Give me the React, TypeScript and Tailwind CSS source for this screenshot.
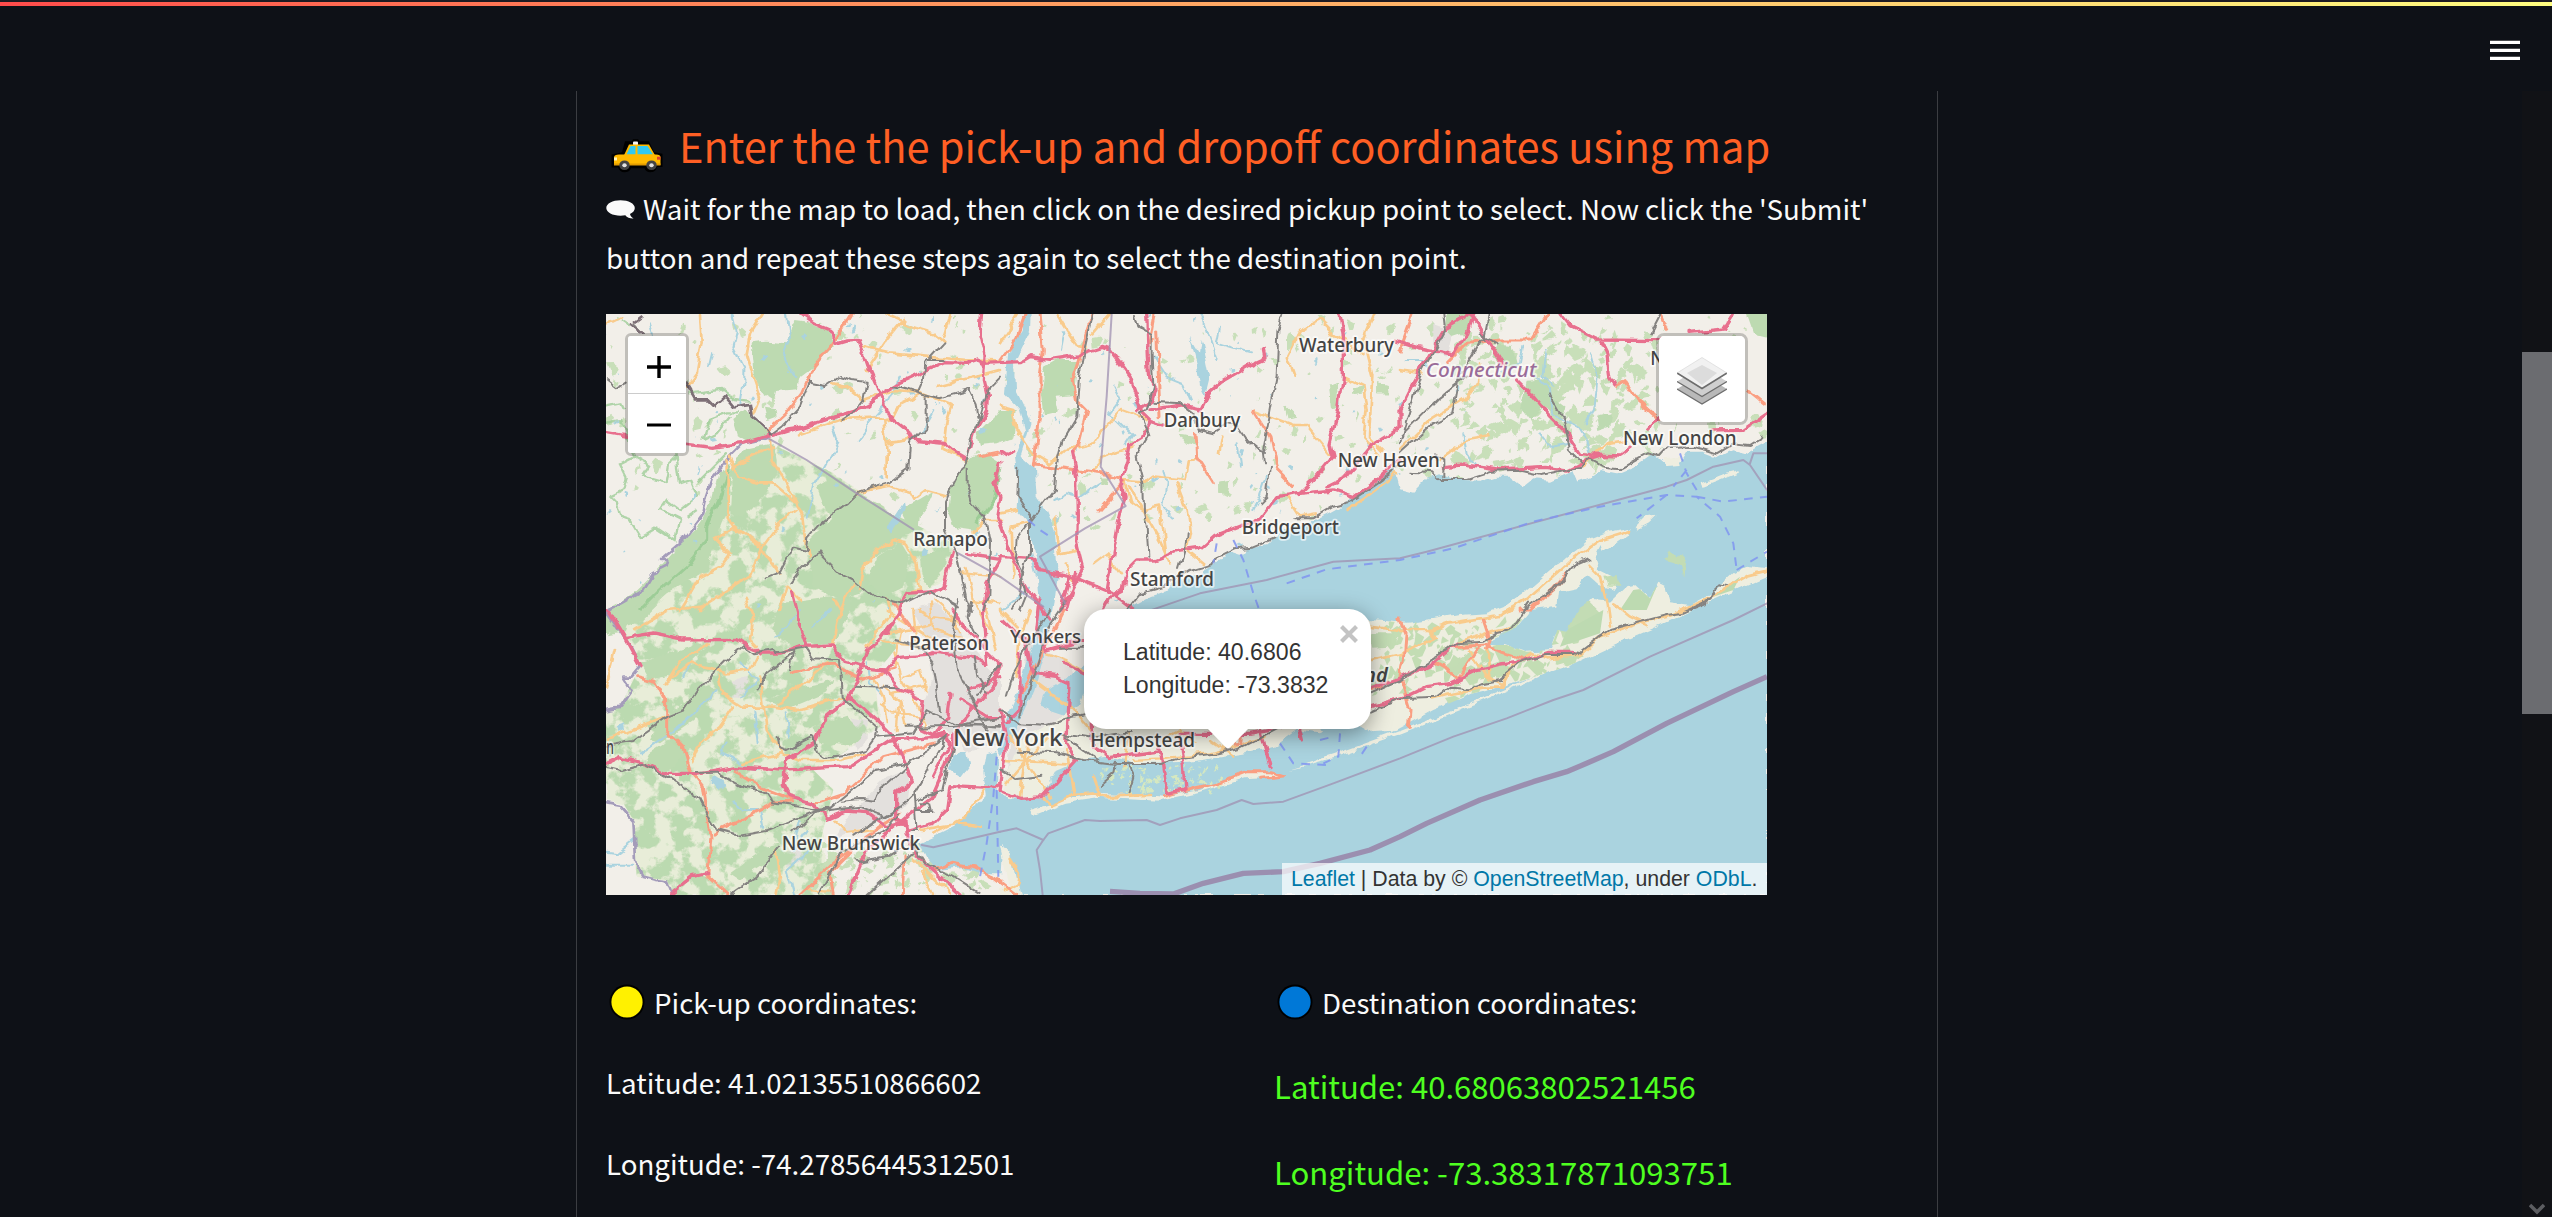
import type { ReactNode } from "react";

const SANS = "font-['Noto_Sans_CJK_SC','Noto_Sans',sans-serif]";
const ARIAL = "font-['Liberation_Sans',Arial,sans-serif]";

/* Map geometry uses three units for each screen pixel. */

const WATER = [
  // Long Island Sound and the open sea
  "M1420 1130L1440 1070L1490 1010L1560 950L1580 900L1600 885L1650 858L1700 842L1735 808L1800 795L1815 775L1860 750L1880 722L1920 735L1940 715L2000 703L2050 655L2130 640L2190 610L2225 590L2260 555L2320 530L2350 495L2385 478L2400 535L2440 545L2480 505L2520 490L2570 512L2640 515L2690 500L2730 500L2770 532L2800 508L2850 512L2920 480L2935 515L2975 500L3000 480L3050 490L3110 465L3160 430L3195 460L3240 458L3260 425L3310 425L3350 440L3400 415L3440 425L3501 392V1755H1262L1240 1690L1210 1600L1205 1690L1140 1690L1090 1672L1010 1680L975 1640L955 1600L1000 1580L1060 1550L1120 1500L1160 1455L1150 1390L1160 1330L1195 1320L1190 1440L1230 1465L1330 1465L1345 1380Z",
  // Hudson river
  "M1270 12L1265 60L1225 120L1215 250L1260 300L1275 360L1245 440L1255 520L1250 600L1285 640L1295 690L1310 760L1320 900L1305 1000L1250 1150L1215 1230L1190 1300L1205 1330L1240 1280L1300 1150L1340 1010L1360 880L1372 780L1365 660L1340 600L1310 560L1305 480L1262 440L1292 340L1245 240L1242 160L1290 60L1292 12Z",
  "M1420 1090L1450 1060L1460 1140L1410 1220L1320 1190L1330 1150Z",
  "M1060 1335L1100 1320L1110 1360L1080 1400L1050 1380Z",
  "M860 650L890 610L912 575L915 600L890 640L870 668Z",
  "M335 1395L380 1410L385 1435L360 1442L335 1425Z",
  "M1770 80L1800 130L1805 90L1820 150L1830 200L1815 260L1800 230L1790 160Z",
  "M50 1250L75 1240L78 1260L58 1268Z",
];

const LONG_ISLAND =
  "M1208 1450L1225 1380L1250 1310L1290 1280L1350 1240L1440 1180L1480 1080L1600 1000L1800 960L2000 950L2200 940L2310 930L2420 938L2500 930L2580 915L2660 910L2710 892L2770 850L2850 780L2930 720L2965 690L3020 668L3095 655L3085 675L3040 705L3010 725L3005 705L2985 745L2995 780L3045 805L3040 840L2995 825L2960 795L2930 835L2880 845L2875 890L2790 900L2745 955L2680 985L2660 1005L2720 1005L2780 1025L2850 1020L2872 960L2900 965L2940 910L2980 870L3030 875L3080 828L3105 825L3150 865L3175 815L3195 825L3210 880L3270 888L3330 855L3400 790L3440 770L3501 778V800L3400 845L3300 890L3180 945L3040 1005L2900 1070L2740 1120L2700 1130L2620 1150L2500 1200L2380 1265L2320 1270L2240 1235L2160 1270L2090 1260L2020 1310L1940 1330L1770 1355L1600 1360L1520 1340L1440 1350L1370 1380L1340 1440L1330 1465L1230 1465Z";

const BARRIERS = [
  "M1290 1500L1360 1480L1400 1465L1500 1452L1660 1458L1690 1460L1800 1440L1930 1390L2010 1385L2050 1398L1990 1402L1930 1405L1800 1445L1680 1472L1500 1464L1400 1478L1300 1518Z",
  "M2060 1378L2200 1335L2400 1262L2640 1170L2860 1075L2980 1015L2860 1082L2640 1178L2400 1272L2200 1345Z",
  "M1200 1610L1225 1615L1240 1660L1262 1755H1200V1735L1225 1725Z",
  "M3305 520L3380 490L3420 480L3410 492L3350 515L3310 530Z",
  "M3190 445L3240 440L3245 465L3200 468Z",
  "M3110 655L3140 625L3170 620L3150 640L3130 650L3118 662Z",
];

const DEEP_FOREST = [
  "M455 100L500 95L560 100L580 30L620 35L650 50L690 60L700 110L640 170L600 200L590 235L525 240L520 270L490 250L465 205L460 150Z",
  "M400 330L440 300L480 345L505 375L440 395L415 380Z",
  "M495 290L525 295L530 320L505 330Z",
  "M400 460L450 415L520 400L530 450L530 495L490 560L430 620L390 610L395 520Z",
  "M18 900L100 850L180 770L250 690L300 640L340 560L360 480L395 470L380 600L350 680L320 780L200 850L120 920L18 965Z",
  "M650 530L700 500L780 550L860 600L960 655L900 690L800 760L790 850L720 870L640 830L620 700L690 630Z",
  "M900 600L960 570L1000 545L985 580L960 610L955 660L920 640Z",
  "M830 740L900 690L930 740L910 830L850 860L800 820Z",
  "M960 740L1040 720L1035 780L985 830L965 800Z",
  "M1050 540L1100 450L1160 430L1200 455L1190 560L1130 660L1060 650L1040 600Z",
  "M1130 370L1200 300L1250 300L1240 380L1190 400L1140 405Z",
  "M1335 170L1370 150L1445 150L1430 200L1425 255L1370 260L1380 310L1335 320L1325 250Z",
  "M2540 12L2610 12L2605 60L2560 75L2535 50Z",
  "M2690 100L2740 105L2755 170L2720 180L2680 140Z",
  "M2780 215L2840 210L2860 260L2900 290L2880 320L2830 290L2790 330L2760 290Z",
  "M2980 160L3005 165L3000 210L2980 200Z",
  "M2988 320L3030 310L3025 350L2995 360Z",
  "M3440 12H3501V80L3460 70Z",
  "M540 880L680 860L760 870L730 950L700 1000L560 1000L510 960Z",
  "M120 1060L290 1000L320 1010L240 1090L150 1110Z",
  "M180 1230L330 1120L350 1140L280 1230L180 1300L150 1290Z",
  "M500 1170L600 1130L700 1110L680 1150L560 1200Z",
  "M20 970L90 890L180 880L130 930L80 945L75 960Z",
  "M640 1250L740 1220L790 1270L750 1310L660 1300Z",
  "M390 1690L500 1610L545 1600L500 1660L420 1710Z",
  "M150 1330L210 1290L260 1330L190 1390L130 1370Z",
  "M2520 1080L2620 1020L2610 1060L2570 1095Z",
  "M2600 1100L2660 1060L2720 1070L2690 1100L2600 1110Z",
  "M2920 910L2970 880L3000 910L2960 940L2900 960Z",
  "M3010 800L3050 795L3055 830L3020 830Z",
  "M3195 750L3210 715L3225 735L3258 740L3250 800L3240 765L3215 755Z",
  "M2185 225L2210 215L2215 290L2190 295Z",
  "M2250 235L2290 230L2285 250L2255 255Z",
  "M2335 220L2360 225L2362 250L2335 250Z",
  "M1855 515L1885 510L1880 550L1855 545Z",
  "M1740 375L1780 380L1785 410L1755 400Z",
  "M2310 970L2390 970L2395 1005L2320 1010Z",
  "M2050 285L2085 320L2060 325Z",
  "M1500 500L1530 500L1525 525L1505 528Z",
];

const FOREST_ZONE =
  "M395 470L510 400L700 490L860 600L960 650L1060 700L1040 800L880 900L900 1000L820 1100L840 1250L700 1350L640 1380L700 1440L660 1600L700 1755H220L200 1710L110 1700L100 1530L70 1480L18 1470V1200L60 1190L120 1070L80 1000L18 900L180 800L320 680Z";

const MOTORWAY = [
  "M18 370L85 382M255 402L330 412L430 400L500 378L540 370L620 345L700 322L750 310L800 290L840 255L800 165L775 88L740 90L705 100L700 65L640 40L600 12",
  "M500 380L560 360L610 352L720 315L760 305L820 275L840 250L900 215L1030 158L1100 160L1130 150L1150 160L1265 155L1290 140L1350 148L1440 135L1510 112L1530 120L1590 200L1630 310L1655 335L1690 345",
  "M840 255L870 320L920 360L935 390L1030 400L1060 425L1095 445",
  "M1145 12L1140 70L1155 140L1150 210L1162 260L1160 300L1125 360L1105 430",
  "M1200 430L1215 440L1235 430M1200 460L1185 520L1200 560L1190 620L1205 660L1235 740L1280 830L1350 930",
  "M1200 740L1300 745L1320 785L1410 800L1460 822L1530 850L1560 870L1600 900",
  "M1650 335L1630 380L1590 405L1580 460L1565 510L1575 560L1555 640L1545 700L1535 760L1520 850",
  "M1415 430L1430 500L1432 620L1430 700L1450 780L1400 870L1380 900M1410 800L1380 900M1430 790L1400 900",
  "M1510 900L1530 860L1570 840L1580 780L1610 750L1660 750L1730 725L1800 715L1840 680L1910 652L1980 625L2030 560L2100 550L2200 540L2260 560L2350 495L2400 450",
  "M1640 12L1645 140L1650 210L1665 240L1655 270L1610 305M1650 300L1740 285L1800 300L1825 250L1865 215L1950 165L1995 145L1990 120",
  "M2180 530L2240 500L2320 400L2400 350L2400 300L2440 220L2530 60L2610 12",
  "M2220 12L2230 80L2230 200L2215 300L2190 400L2200 440L2150 500L2100 550",
  "M2385 90L2450 110L2540 130L2560 135L2600 70L2620 12M2600 12L2640 55L2710 165M2750 210L2800 260L2850 320L2900 370L2940 430L2980 435L3060 438L3090 415",
  "M2530 470L2590 465L2700 480L2830 472L2900 480L2950 455L3000 440",
  "M2880 12L2910 50L2990 90L3180 92M3000 90L3020 130L3030 200L3045 225M3270 70L3370 60L3400 12M3140 360L3180 320M3330 360L3430 358L3501 310",
  "M80 985L160 972L250 990L400 988L460 1015L480 1032L540 1032L600 1010L700 1005L740 1060L800 1075L860 1080L890 1040L1010 1030L1100 1040L1160 1060",
  "M575 850L600 950L620 1005M880 930L840 990L800 1020L770 1120L730 1180L680 1220L640 1300L560 1350L550 1420L570 1460L640 1480L680 1525L740 1500L800 1505L860 1550L915 1540",
  "M18 1360L60 1340L140 1365L200 1390L290 1390L400 1370L550 1380L750 1370L870 1290L1000 1280L1050 1280",
  "M750 1160L830 1230L880 1280L940 1410L890 1450L890 1520L920 1560L1000 1540L1040 1500L1050 1430L1170 1435L1200 1420",
  "M850 1080L900 1140L970 1170L960 1250L1000 1270M1050 1150L1040 1220L1000 1280",
  "M1000 845L920 850L900 900L860 970M1060 900L1090 950L1150 1010L1200 1060L1180 1130L1080 1240L1060 1300L1030 1390L1000 1460L920 1520L800 1620L745 1755",
  "M1060 720L1030 830L980 850M1100 730L1200 745M1200 750L1160 820L1150 920L1160 1060",
  "M915 1530L915 1570L960 1650L1080 1755M18 890L60 960L120 1070M215 1750L280 1700L320 1690",
  "M1480 1240L1480 1310L1530 1340L1680 1320M1680 1310L1700 1445M1740 1280L1750 1370L1755 1440L1700 1450",
  "M1980 1250L2010 1370M1740 1270L1950 1270L2110 1240M2100 1250L2110 1290",
  "M2310 1135L2400 1105L2500 1060L2570 1000M2310 1190L2420 1160L2480 1130L2550 1120L2620 1085L2700 1065L2770 1055L2840 1030L2930 1030",
  "M1210 930L1280 1000L1300 1090L1370 1100L1410 1120L1400 1300L1430 1350L1330 1460L1260 1465L1200 1440L1220 1300L1200 1200",
  "M1390 1060L1470 1100M1260 1030L1260 1200L1220 1240M1320 870L1310 960L1340 1020L1480 980",
  "M1100 1140L1160 1120L1200 1100M1080 1170L1160 1220L1210 1220M1000 1280L1030 1270L1050 1300L1000 1400",
];

const TRUNK = [
  "M755 12L720 70L690 110L640 170L605 250L560 310L500 365",
  "M1275 12L1250 80L1200 150M1320 12L1330 120L1320 200L1320 310L1300 470M1480 12L1460 70L1440 150L1420 210L1430 270L1460 300L1435 400L1415 430",
  "M1300 465L1360 470L1430 480L1520 490L1575 515L1500 600M1665 12L1650 100L1660 90M1670 60L1680 320M1785 370L1790 440L1840 520",
  "M1960 300L2010 380L2030 480L2080 530M2440 12L2400 120M2540 160L2600 100L2700 90L2790 90L2840 12",
  "M110 1100L170 1115L200 1170L200 1260L250 1310L270 1380L310 1430L330 1580L320 1700L380 1755M340 1570L520 1480L580 1475M400 1380L480 1430L580 1470M640 1480L730 1450L850 1340L1000 1300",
  "M570 1090L640 1070L700 1065L780 1110L880 1080M600 1755L700 1660L800 1580L900 1510M700 1755L690 1690L760 1620",
  "M910 1755L915 1640M1000 1680L1060 1660L1120 1670L1200 1710M880 880L940 960",
  "M1690 1460L1740 1445L1850 1420L1940 1385L2010 1385L2050 1398M1985 1405L2050 1398M2300 1140L2350 1130M2400 930L2415 970L2410 1050L2400 1100L2430 1200L2425 1255",
  "M2650 930L2670 990L2660 1020M2560 1010L2660 1005M2640 1010L2570 1110M2500 1060L2570 1100M2660 1010L2780 1050M2900 790L2860 840L2790 900L2760 900",
  "M3050 230L3075 215L3110 270L3180 330M3440 240L3490 280M3180 12L3200 60M1180 1700L1250 1755M1190 430L1140 440",
  "M1905 1270L1930 1275L1928 1300L1905 1302L1905 1280M1390 900L1360 960L1250 1180",
];

const PRIMARY = [
  "M300 12L305 100L290 190L260 230M485 12L450 70L440 130L460 200L480 260L460 310M18 40L60 20M900 40L1000 70L1030 95M910 30L860 90L800 180M860 12L910 35M785 110L870 130L980 140L1100 150L1200 155M1050 12L1030 80",
  "M700 220L740 230L790 270L880 240L960 245L1020 270L1055 285L1040 330L1030 420L1100 450M1010 230L1200 180M600 370L720 330L850 325L880 320L900 280L960 250M860 400L930 390M850 330L860 420L860 500",
  "M770 550L870 530L930 550L940 570L980 540L1035 555M510 390L515 450L560 520L610 620L625 740M390 440L420 500L470 520L520 520L580 570",
  "M380 450L380 620L400 650L480 710L540 790M400 470L520 410M400 650L345 685L390 730L360 770L300 800L240 900M540 900L560 830L600 870M590 600L540 640L480 720L450 800L410 820L330 870L300 900",
  "M780 840L790 780L830 720L880 690L920 700L950 760L960 840L920 850M720 900L740 850L760 820M1200 630L1160 630L1120 670",
  "M18 1290L120 1250L200 1220M320 1000L290 1030L240 1050L200 1120M100 960L200 900L310 890M440 870L460 920L450 990L470 1010M470 1040L450 1080L380 1090L300 1070L270 1060L200 1120M360 1100L370 1150L430 1190L520 1190L600 1200L740 1160M480 1100L490 1180L500 1260L550 1330M530 1180L600 1130L680 1060M400 1190L360 1250L300 1300L280 1350",
  "M700 870L720 900L700 1000M860 870L870 910L800 1010M18 1130L45 1020M430 1360L540 1330L600 1350L720 1350L800 1330",
  "M1140 1550L1080 1540L960 1560M1160 1430L1100 1520L1000 1570M530 1755L540 1700L530 1620M700 1530L740 1570L820 1560M970 1690L1000 1755M940 1650L1050 1750",
  "M1370 12L1400 60L1430 105L1460 110M1480 70L1530 12M1350 460L1400 420L1480 400L1500 370L1560 300L1640 330M1470 490L1500 460L1500 440L1600 410",
  "M1575 510L1590 570L1630 600L1680 590L1700 740M1575 510L1640 515L1660 500L1760 510L1770 450L1790 440M1730 520L1760 600L1770 670L1760 720L1810 760M1590 530L1680 690L1710 760",
  "M1860 430L1870 380M1960 300L2080 345L2120 345L2190 430M2080 200L2060 140L2100 60L2160 30L2200 70L2290 130M2230 200L2290 230L2300 300L2290 380L2340 430M2320 12L2290 80L2320 200L2310 380L2350 420",
  "M2400 180L2470 190M2400 420L2500 320L2600 260L2630 220L2640 160M2510 450L2540 430L2600 390L2670 378M2950 470L3020 400L3080 390M2390 490L2300 560L2240 600M2060 560L2100 620L2150 610",
  "M1255 12L1200 100M1200 290L1240 300L1255 370M1240 340L1300 430L1350 460M1365 620L1380 730L1430 720M1200 610L1250 600M1240 800L1235 650L1280 640",
  "M2400 960L2490 960L2550 940L2640 925L2700 915L2780 870L2860 800L2940 730L3000 690L3090 662M2490 960L2510 985L2400 1030M2570 1000L2660 970L2730 955M2960 760L3000 800L3020 880L3030 950M3040 880L3090 920L3140 945",
  "M2610 1020L2660 1100L2700 1120M2660 1020L2665 1100M2700 1130L2740 1070L2800 1030L2840 1045L2940 1035L3000 980L3130 935L3200 920L3320 870L3440 800L3500 785M2500 1165L2540 1155L2650 1130L2710 1130L2730 1090",
  "M2310 950L2400 960M2310 1050L2400 1030M1410 1455L1490 1450L1500 1460L1650 1455M1400 1320L1420 1450M1480 1400L1500 1455M1330 1460L1355 1485L1410 1460M1215 1740L1250 1720L1260 1690L1235 1650",
  "M1200 900L1260 960L1250 1100M1290 900L1260 990M1300 1110L1420 1200L1490 1280M1230 1280L1350 1460M1280 1300L1260 1460M1210 1350L1400 1360M1340 1280L1220 1420",
];

const URBAN = [
  "M860 970L900 960L960 950L1000 940M850 990L880 1000L980 1010M880 1030L900 1100L950 1180L980 1250M900 960L880 1080M940 900L950 1010M860 900L1000 990M850 1130L900 1170L920 1250M840 1180L880 1210L960 1220M820 1100L850 1160L860 1240M870 1150L980 1130M900 1170L890 1260M990 880L1000 960L1090 990M960 900L990 920L1060 930L1080 970M1000 870L1100 960M910 1100L960 1080L980 1140",
  "M1100 780L1120 870L1180 980M1110 870L1200 880M1090 790L1200 800M1160 900L1190 1020M1400 760L1420 820M1390 1050L1460 1090M1340 1030L1400 1050",
  "M1480 760L1520 730L1560 790M1700 1280L1740 1260L1780 1300M1600 1350L1680 1345L1830 1330L1900 1310L2000 1280M1580 1270L1570 1370M1830 1290L1900 1340M2250 1150L2310 1140M620 1740L690 1745",
];

const RAIL = [
  "M18 210L50 235L80 215M985 150L1030 100M1030 150L980 150L975 200L955 245M630 215L680 225L720 198L750 210L800 215L790 270L760 310L730 330M630 215L600 290L550 345L510 375M880 225L920 235L960 248L1020 265L1110 240L1130 280L1135 320",
  "M1200 200L1165 235L1140 320L1110 390L1105 440L1060 520L1035 570L1035 660L1070 720L1100 870L1110 900",
  "M980 260L980 350L930 400L925 480L870 520L770 550L740 580L660 640L625 680L620 720L580 710L540 790L500 805",
  "M570 820L600 780L640 740L660 730L720 790L760 810L820 860L910 885L990 845L1080 895",
  "M18 1305L100 1290L200 1220L250 1200L290 1140L350 1080L380 1050L430 1008L460 1030L520 1020L530 1030L620 1015L640 1045L720 1050L725 1160L830 1250L825 1280L940 1270L980 1200L1060 1240L1200 1250",
  "M580 1025L570 1080M580 1030L500 1090L470 1135M530 1275L535 1310L560 1320L640 1280L650 1320L680 1340L740 1335L800 1320L825 1285M765 1130L900 1135",
  "M18 1370L60 1380L130 1360L200 1400L300 1470L330 1530L350 1560L410 1575L500 1560L640 1505L780 1490L860 1520L900 1490M290 1385L350 1385L430 1430L500 1450L520 1480L600 1490L650 1500L690 1495L830 1380L920 1360L1040 1280",
  "M1040 1280L940 1450L900 1490L820 1540L760 1580M660 1750L700 1680L730 1620L860 1560L900 1510M725 1475L780 1470L820 1475L830 1450L930 1360M650 1500L580 1570M390 1755L470 1700L540 1610",
  "M920 1250L1200 1245M940 1440L950 1560L930 1560M930 1590L970 1660L1060 1700L1140 1750M940 1630L800 1755M770 1640L780 1655L870 1640L900 1620M950 1470L1030 1440L1060 1310M960 1480L990 1480L995 1500L950 1500",
  "M1480 12L1460 100L1440 200L1432 320L1390 390L1370 470L1365 540L1320 600L1250 690L1245 740L1270 790L1260 860L1230 900",
  "M1100 470L1100 520L1120 580L1155 620L1170 700L1165 860L1150 900M1255 470L1252 560L1290 620L1290 720L1270 800L1280 850L1260 900",
  "M1605 12L1615 50L1655 75L1655 140L1660 230L1640 300L1620 310L1645 380L1610 440L1630 520L1632 600L1640 650L1645 740M1660 275L1740 280L1780 310L1800 360L1840 370L1880 340L1910 345L1940 390L1995 435",
  "M2050 12L2035 60L2030 200L2010 310L1990 420L1995 460M2010 470L2000 560L1980 580",
  "M1580 900L1620 850L1690 830L1770 780L1840 760L1850 740L1900 715L1960 710L2020 685M2085 625L2140 625L2200 590L2240 580L2330 520L2400 470",
  "M1760 670L1755 730L1740 780M2400 430L2500 340L2560 310L2580 200L2640 100L2660 80M2640 70L2690 100M2670 12L2655 90M2530 12L2535 60L2460 200L2400 400M2400 380L2520 260L2600 200",
  "M2430 485L2500 490L2520 510L2600 510L2680 485L2760 482L2820 495L2880 482L2940 470L2970 448L3010 470L3060 475L3140 430L3180 438L3200 415L3280 410L3320 420L3350 430L3400 400L3450 405L3490 380M2945 455L2910 420L2890 320L2850 250M2505 430L2530 445L2530 500",
  "M2770 900L2860 840L2930 760L2965 745M3330 870L3340 840L3360 820L3390 825M3270 900L3320 880L3340 850",
  "M2310 1150L2400 1110L2480 1060L2570 1000L2650 995L2690 970L2730 960L2790 875M2310 1205L2400 1165L2510 1160L2550 1130L2610 1135L2650 1120L2700 1110L2760 1060L2830 1035L2930 1035L3000 980L3030 960L3200 915L3240 910L3320 875",
  "M1250 1325L1370 1330L1450 1350L1550 1362L1680 1362L1740 1345L1850 1330L1930 1310L2040 1255L2110 1235M1380 1270L1470 1285L1590 1265M1400 1280L1495 1350M1580 1360L1600 1400L1585 1450M1545 1355L1540 1390L1500 1425M1200 1200L1260 1240L1340 1245L1410 1225L1460 1215",
  "M1400 870L1340 960L1300 1100L1260 1220M1350 900L1240 1090L1220 1160M1380 1010L1450 1010M1200 1380L1250 1410L1330 1400M3180 12L3150 70",
  "M100 40L130 75M1080 870L1060 950L1070 1070L1120 1180L1160 1260M1110 870L1100 920L1130 980M1120 1040L1130 1100L1160 1150M880 990L960 1010L1000 1060L1020 1200M1130 1160L1200 1060M1090 1240L1200 1220",
];

const STATE_LINE = [
  "M505 385L620 450L770 550L940 658M1075 730L1200 800L1330 890",
  "M1535 12L1520 260L1502 470L1577 588L1455 655L1320 740L1395 880",
  "M1200 1565L1250 1555L1330 1590L1345 1570L1455 1530L1500 1533L1640 1530L1680 1545L1740 1525L1850 1500L1925 1470L1960 1482L2050 1475L2200 1420L2400 1345L2560 1280L2720 1225L2860 1170L2950 1140L3150 1040L3400 930L3501 880",
  "M1330 1590L1310 1620L1320 1680L1328 1755M965 1605L1000 1612L1200 1565M1640 905L1800 850L2000 810L2200 755L2400 745L2480 725L3200 530L3260 510L3340 470L3430 450L3450 465L3501 540M3450 460L3460 430L3501 430",
];

const RIVER_LINE = [
  "M18 900L60 880L130 840L160 790L200 770L205 750L180 750L250 690L310 610L320 560L340 500L380 450L430 400L500 385",
  "M18 905L50 950L90 1010L120 1070L95 1100L70 1100L80 1115L95 1140L60 1190L18 1198",
  "M18 1477L60 1485L100 1530L105 1650L130 1700L170 1710L205 1715L220 1755",
];

const STREAMS = [
  "M395 12L410 70L400 110L430 170L430 230L420 290M560 12L570 80L545 130L590 200M700 350L715 400L680 460L640 530L620 620M150 40L160 90L140 120L120 110M340 130L330 170",
  "M18 1625L50 1630L100 1590M18 1670L100 1670M120 1330L250 1240L350 1140M270 1060L250 1100M380 1300L370 1330L440 1370L480 1380M400 1480L430 1500L480 1500L490 1550M560 1210L570 1280M460 1200L470 1300M600 900L560 950L530 980M690 900L640 950",
  "M900 200L860 280L800 350L770 390M1000 300L960 370M800 1060L810 1120L840 1150M430 1060L470 1110L430 1160M600 1530L580 1620L620 1560M640 1610L560 1680L580 1755",
  "M1360 570L1400 550L1440 560L1500 520M1540 230L1560 270L1530 310L1570 350M1390 70L1380 120M1910 400L1920 470M1800 12L1830 90L1850 150M1660 140L1700 200L1750 220L1770 270M1860 50L1850 100L1950 130M1690 480L1700 520L1690 590L1720 620",
  "M2770 110L2760 160L2700 180M2810 200L2850 240L2860 310L2930 350L2960 400L2970 430M2840 120L2830 200L2860 230M2970 130L2990 200L2980 300L2960 340M2590 370L2600 430L2630 470M2820 370L2850 410L2920 400M2420 150L2470 150L2500 180",
  "M1200 900L1230 880L1290 830M1290 720L1310 800M1560 330L1600 370L1580 400M2000 500L1980 560L1960 600",
];

const PARK_LINES =
  "M18 290L60 280L70 300M18 340L60 330L70 350L100 440M265 250L360 240L400 270L450 275M310 390L330 330L380 310L420 310M310 390L350 370L390 320M30 560L70 540L80 500L60 460L100 440L150 470L130 500L200 520L210 460L230 440L240 520L270 510L290 560L240 600L200 570L180 600L240 630L230 690L170 650L120 680L90 630L60 620L50 580Z M290 520L340 470L380 430M260 620L290 600M60 30L90 50";

const FERRY = [
  "M1900 690L1930 750L1960 850L1985 920M2060 820L2180 778L2400 750L2560 715L2800 635L3000 590L3200 555L3290 560L3360 620L3400 700L3410 780M3290 560L3370 575L3501 560M3410 780L3501 725M3200 555L3110 625M3240 430L3260 490L3290 540M3260 480L3220 530",
  "M1285 630L1320 660L1350 680M1190 1340L1180 1460L1160 1600L1140 1700M1190 1440L1195 1700M2040 1300L2080 1360L2180 1365M2220 1270L2215 1340L2170 1360M2300 1310L2280 1340M2160 1290L2200 1280M1850 700L1840 760",
];

const SEA_LIMIT =
  "M1530 1744L1620 1750L1720 1752L1810 1720L1930 1690L2050 1685L2160 1660L2310 1620L2400 1580L2480 1540L2640 1470L2800 1415L2900 1385L2960 1360L3040 1325L3200 1240L3400 1145L3501 1100";

const GREY_TOWN = [
  "M940 900L1000 880L1060 930L1100 1000L1160 1060L1200 1100V1300L1100 1320L1050 1270L980 1240L960 1200L1000 1100L980 1000Z",
  "M390 1120L440 1100L450 1160L400 1160Z",
  "M750 1220L800 1230L800 1290L770 1320Z",
  "M1290 1000L1400 1050L1450 1220L1400 1440L1220 1440L1230 1300L1260 1150Z",
  "M860 1400L930 1370L920 1480L880 1520L700 1590L740 1520Z",
  "M550 1640L600 1600L610 1650L560 1670Z",
  "M2420 1150L2460 1180L2480 1220L2430 1240Z",
  "M2500 40L2560 60L2540 140L2500 130Z",
];

type Label = { t: string; x: number; y: number; w: number; s: number };
const LABELS: Label[] = [
  { t: "Ramapo", x: 940, y: 708, w: 223, s: 57 },
  { t: "Waterbury", x: 2097, y: 125, w: 285, s: 57 },
  { t: "Danbury", x: 1691, y: 350, w: 230, s: 57 },
  { t: "New Haven", x: 2213, y: 472, w: 306, s: 57 },
  { t: "Bridgeport", x: 1925, y: 672, w: 292, s: 57 },
  { t: "Stamford", x: 1590, y: 829, w: 252, s: 57 },
  { t: "New London", x: 3069, y: 406, w: 341, s: 57 },
  { t: "N", x: 3151, y: 166, w: 42, s: 57 },
  { t: "Paterson", x: 928, y: 1021, w: 240, s: 57 },
  { t: "Yonkers", x: 1230, y: 999, w: 213, s: 55 },
  { t: "New York", x: 1059, y: 1309, w: 329, s: 70 },
  { t: "Hempstead", x: 1471, y: 1312, w: 314, s: 57 },
  { t: "New Brunswick", x: 545, y: 1620, w: 415, s: 57 },
  { t: "n", x: 19, y: 1332, w: 23, s: 57 },
];

function noise(seed: number) {
  let v = seed;
  return () => {
    v = (v * 16807) % 2147483647;
    return v / 2147483647;
  };
}

/* Small irregular patches of wood and pond scattered over the land. */
function scatter(seed: number, n: number, x0: number, y0: number, w: number, h: number, size: number) {
  const r = noise(seed);
  let d = "";
  for (let i = 0; i < n; i++) {
    const x = x0 + r() * w;
    const y = y0 + r() * h;
    const k = size * (0.3 + r());
    d += `M${x.toFixed(0)} ${y.toFixed(0)}l${(k * r()).toFixed(0)} ${(-k * r()).toFixed(0)}l${(k * r()).toFixed(0)} ${(k * 0.5).toFixed(0)}l${(-k * 0.3).toFixed(0)} ${(k * r()).toFixed(0)}l${(-k * r()).toFixed(0)} ${(k * 0.2).toFixed(0)}z`;
  }
  return d;
}

const WOODS_N = scatter(17, 330, 18, 12, 3483, 640, 22);
const WOODS_E = scatter(91, 170, 2550, 60, 600, 400, 32);
const PONDS = scatter(43, 150, 18, 12, 2600, 900, 13);
const MARSH = scatter(71, 110, 1500, 1370, 360, 80, 11);
const ISLAND_WOODS = scatter(7, 170, 2320, 940, 600, 230, 30);
const SOUTH_WOODS = scatter(29, 120, 640, 1600, 500, 150, 24);

function Lines({ d, c, w, dash, o }: { d: string[]; c: string; w: number; dash?: string; o?: number }) {
  return (
    <g fill="none" stroke={c} strokeWidth={w} strokeDasharray={dash} opacity={o} strokeLinejoin="round" strokeLinecap={dash ? "butt" : "round"}>
      {d.map((p, i) => (
        <path key={i} d={p} />
      ))}
    </g>
  );
}

function Shapes({ d, c, o }: { d: string[]; c: string; o?: number }) {
  return (
    <g fill={c} opacity={o}>
      {d.map((p, i) => (
        <path key={i} d={p} />
      ))}
    </g>
  );
}

function MapTiles() {
  return (
    <svg viewBox="18 12 3483 1743" preserveAspectRatio="none" className="block h-full w-full">
      <defs>
        <filter id="mottle" x="0" y="0" width="100%" height="100%" colorInterpolationFilters="sRGB">
          <feTurbulence type="fractalNoise" baseFrequency="0.018" numOctaves="5" seed="8" />
          <feColorMatrix values="0 0 0 0 0.735  0 0 0 0 0.855  0 0 0 0 0.69  9 0 0 0 -4.1" />
        </filter>
        <filter id="wobble" x="-2%" y="-2%" width="104%" height="104%" colorInterpolationFilters="sRGB">
          <feTurbulence type="fractalNoise" baseFrequency="0.02" numOctaves="3" seed="3" result="n" />
          <feDisplacementMap in="SourceGraphic" in2="n" scale="26" xChannelSelector="R" yChannelSelector="G" />
        </filter>
        <clipPath id="zone">
          <path d={FOREST_ZONE} />
        </clipPath>
        <clipPath id="island">
          <path d={LONG_ISLAND} />
        </clipPath>
      </defs>
      <rect x="18" y="12" width="3483" height="1743" fill="#f2efe9" />
      <g filter="url(#wobble)">
        <path d={FOREST_ZONE} fill="#e8edd8" />
        <path d={WOODS_N + WOODS_E + SOUTH_WOODS} fill="#c8dfb9" />
        <Shapes d={GREY_TOWN} c="#e3e0dd" />
      </g>
      <g clipPath="url(#zone)">
        <rect x="18" y="400" width="1060" height="1355" filter="url(#mottle)" />
      </g>
      <g filter="url(#wobble)">
        <Shapes d={DEEP_FOREST} c="#bddab1" />
        <path d={PARK_LINES} fill="none" stroke="#9fcd98" strokeWidth="7" opacity="0.8" />
        <path d="M390 460L360 560L320 650L320 690L270 760L180 840L120 900M1200 470L1185 560L1130 640" fill="none" stroke="#90c78b" strokeWidth="9" opacity="0.7" />
        <path d={PONDS} fill="#aad3df" />
        <Shapes d={WATER} c="#aad3df" />
        <path d={LONG_ISLAND} fill="#eeeee0" />
        <Shapes d={BARRIERS} c="#efeee0" />
        <path d="M1350 1400L1440 1370L1500 1360L1480 1440L1360 1460ZM2160 1250L2240 1225L2320 1270L2200 1320Z" fill="#aad3df" />
        <path d={MARSH} fill="#d5e8c0" />
        <Shapes d={DEEP_FOREST.slice(26)} c="#c3dcb4" />
      </g>
      <g clipPath="url(#island)">
        <path d={ISLAND_WOODS} fill="#c3ddb4" />
        <path d="M3100 840L3170 830L3140 900L3060 900ZM2900 960L3010 900L3000 970L2880 1010ZM3340 860L3420 800L3400 840Z" fill="#bddab1" />
      </g>
      <g filter="url(#wobble)">
        <Lines d={STREAMS} c="#aad3df" w={6} />
        <Lines d={RIVER_LINE} c="#a49cba" w={8} />
        <Lines d={URBAN} c="#f9cb8c" w={7} />
        <Lines d={PRIMARY} c="#f9cb8c" w={8} />
        <Lines d={TRUNK} c="#fa9f82" w={9} />
        <Lines d={MOTORWAY} c="#e8708e" w={10} />
        <Lines d={RAIL} c="#858381" w={6} />
        <path d="M100 35L130 12M90 40L130 75M255 215L285 265L330 265L350 285L375 262L400 292L450 285L455 320L490 350L510 375" fill="none" stroke="#7d6f76" strokeWidth="8" />
      </g>
      <Lines d={STATE_LINE} c="#a091b2" w={6} o={0.75} />
      <path d={SEA_LIMIT} fill="none" stroke="#9b8fb0" strokeWidth="16" strokeLinejoin="round" />
      <Lines d={FERRY} c="#8095f0" w={6} dash="26 22" o={0.85} />
      <g className="font-['Noto_Sans',sans-serif]" fill="#444" fontWeight="500" stroke="#ffffff" strokeOpacity="0.65" strokeWidth="11" strokeLinejoin="round" paintOrder="stroke">
        {LABELS.map((l) => (
          <text key={l.t} x={l.x} y={l.y} fontSize={l.s} textLength={l.w} lengthAdjust="spacingAndGlyphs">
            {l.t}
          </text>
        ))}
        <text x="2477" y="200" fontSize="57" fontStyle="italic" fill="#9a6c99" textLength="332" lengthAdjust="spacingAndGlyphs">
          Connecticut
        </text>
        <text x="2363" y="1115" fontSize="60" fontStyle="italic" fontWeight="600" textAnchor="end">
          nd
        </text>
      </g>
    </svg>
  );
}

function LayersIcon() {
  return (
    <svg viewBox="0 0 50 48" className="h-12 w-[50px]">
      <path d="M0 32L25 17L50 32L25 47Z" fill="#b9b9b9" />
      <path d="M0 32L25 47L50 32" fill="none" stroke="#6d6d6d" strokeWidth="1.3" />
      <path d="M0 24.5L25 9.5L50 24.5L25 39.5Z" fill="#cfcfcf" />
      <path d="M0 24.5L25 39.5L50 24.5" fill="none" stroke="#6d6d6d" strokeWidth="1.3" />
      <path d="M0 16L25 0.5L50 16L25 31.5Z" fill="#f1f1f1" />
      <path d="M10 16L25 8L40 16L25 28Z" fill="#dcdcdc" />
      <path d="M0 16L25 31.5L50 16" fill="none" stroke="#6d6d6d" strokeWidth="1.5" />
      <path d="M0 16L25 0.5L50 16" fill="none" stroke="#d4d4d4" strokeWidth="0.6" />
    </svg>
  );
}

function Taxi() {
  return (
    <svg viewBox="0 0 52 46" preserveAspectRatio="none" className="h-[34px] w-[52px] shrink-0">
      <path d="M11 18L14 3L21 3L22 0.5H27L29 3H38L43 18L51.5 20V38H46C45 43 43 45 39.5 45C36 45 34 42 33.5 39.500H20C19 43 17 45 13.5 45C10 45 8 42 7 38.500H0.500V21Z" fill="#000" />
      <rect x="22" y="3.5" width="5" height="5" rx="1" fill="#f4f4f4" />
      <path d="M13 22L18 7.500H38L44 22Z" fill="#ffb900" />
      <path d="M15.500 21L19.500 9.500H24.500V21ZM26.500 9.500H36.500L42 21H26.500Z" fill="#31c9f2" />
      <path d="M3 25C3 22 5 21 8 21H45C48 21 49.500 22 49.500 25V35H3Z" fill="#ffb900" />
      <path d="M3 33H49.500V36H3Z" fill="#e09a00" />
      <path d="M46 24H49.500V28H46Z" fill="#e04030" />
      <path d="M3 25H6V29H3Z" fill="#fff4c0" />
      <ellipse cx="13.5" cy="35.500" rx="5.200" ry="6.500" fill="#444" />
      <ellipse cx="40.5" cy="35.500" rx="5.200" ry="6.500" fill="#444" />
      <ellipse cx="13.5" cy="35.500" rx="2.200" ry="2.800" fill="#e2e2e2" />
      <ellipse cx="40.5" cy="35.500" rx="2.200" ry="2.800" fill="#e2e2e2" />
    </svg>
  );
}

function Bubble() {
  return (
    <svg viewBox="0 0 30 19" className="mr-[7px] mb-px inline-block h-[19px] w-[30px] align-baseline">
      <path d="M14.5 0.3C22.5 0.3 28.8 3.6 28.8 8C28.8 10.5 27 12.5 24 14C24.3 15.8 25.5 17.3 27.5 18.5C24 18.6 21 17.6 19.3 15.3C17.8 15.6 16.2 15.7 14.5 15.7C6.5 15.7 0.3 12.4 0.3 8C0.3 3.6 6.5 0.3 14.5 0.3Z" fill="#fafafa" />
    </svg>
  );
}

function Dot({ fill }: { fill: string }) {
  return (
    <svg viewBox="0 0 36 36" className="h-9 w-9 shrink-0">
      <circle cx="18" cy="18" r="17.5" fill="#000" />
      <circle cx="18" cy="18" r="15.6" fill={fill} />
    </svg>
  );
}

function Row({ children, className }: { children: ReactNode; className: string }) {
  return <p className={`whitespace-nowrap ${className}`}>{children}</p>;
}

export default function App() {
  return (
    <div className={`flex h-[1217px] w-full flex-col overflow-hidden bg-[#0e1117] text-[27.7px] text-[#fafafa] ${SANS}`}>
      <header className="flex h-[91px] shrink-0 flex-col">
        <div className="h-[2px] bg-[#1e1b22]" />
        <div className="h-1 bg-linear-to-r from-[#ff4b4b] to-[#fffd80]" />
        <div className="flex justify-end pt-[34px] pr-8">
          <div className="flex w-[30px] flex-col gap-1">
            <div className="h-1 border-t border-[#4a4c50] bg-white" />
            <div className="h-1 border-t border-[#4a4c50] bg-white" />
            <div className="h-1 border-t border-[#4a4c50] bg-white" />
          </div>
        </div>
      </header>

      <div className="flex min-h-0 flex-1">
        <main className="ml-[576px] w-[1362px] shrink-0 border-x border-[#3b3d42] pt-[30px] pl-[29px]">
          <h2 className="flex h-12 items-center text-[41.55px] leading-[48px] text-[#ff5f24]">
            <span className="mt-[21px] mr-4 ml-[5px] flex">
              <Taxi />
            </span>
            <span className="whitespace-nowrap">Enter the the pick-up and dropoff coordinates using map</span>
          </h2>
          <p className="mt-[15px] leading-[49px] whitespace-nowrap">
            <Bubble />
            Wait for the map to load, then click on the desired pickup point to select. Now click the 'Submit'
            <br />
            button and repeat these steps again to select the destination point.
          </p>

          <div className={`relative mt-8 h-[581px] w-[1161px] overflow-hidden ${ARIAL}`}>
            <MapTiles />

            <div className="absolute top-[19px] left-[19px] flex flex-col rounded-[6px] border-[3px] border-black/20 bg-clip-padding">
              <button className="flex h-[58px] w-[58px] items-center justify-center rounded-t-[3px] border-b border-[#ccc] bg-white">
                <svg viewBox="0 0 24 24" className="mt-[5px] ml-[3px] h-6 w-6">
                  <path d="M0 12H24M12 1V23" stroke="#000" strokeWidth="3.4" />
                </svg>
              </button>
              <button className="flex h-[59px] w-[58px] items-center justify-center rounded-b-[3px] bg-white">
                <svg viewBox="0 0 24 24" className="mt-[3px] ml-[3px] h-6 w-6">
                  <path d="M0 12H24" stroke="#000" strokeWidth="3" />
                </svg>
              </button>
            </div>

            <div className="absolute top-[19px] right-[19px] rounded-[8px] border-[3px] border-black/20">
              <div className="flex h-[86px] w-[86px] items-center justify-center rounded-[5px] bg-white pt-[3px]">
                <LayersIcon />
              </div>
            </div>

            <div className="absolute top-[295px] left-[478px] h-[120px] w-[287px] rounded-[22px] bg-white px-[39px] pt-[27px] text-[23.1px] leading-[33px] whitespace-nowrap text-[#333] shadow-[0_5px_22px_rgba(0,0,0,0.4)]">
              <p>Latitude: 40.6806</p>
              <p>Longitude: -73.3832</p>
              <svg viewBox="0 0 18 18" className="absolute top-4 right-[13px] h-[18px] w-[18px]">
                <path d="M1.5 1.5L16.5 16.5M16.5 1.5L1.5 16.5" stroke="#c3c3c3" strokeWidth="4.2" />
              </svg>
              <svg viewBox="0 0 42 21" className="absolute top-[119px] left-[123px] h-[21px] w-[42px]">
                <path d="M0 0H42L23 19.5Q21 21.5 19 19.5Z" fill="#fff" />
              </svg>
            </div>

            <div className="absolute right-0 bottom-0 flex h-8 w-[485px] items-center bg-white/70 pl-[9px] text-[21.3px] leading-8 whitespace-pre text-[#333]">
              <span className="text-[#0078a8]">Leaflet</span> | Data by © <span className="text-[#0078a8]">OpenStreetMap</span>, under <span className="text-[#0078a8]">ODbL</span>.
            </div>
          </div>

          <div className="mt-[83px] flex leading-[48px]">
            <section className="w-[668px]">
              <div className="flex items-center">
                <span className="mr-[9px] ml-[3px] flex">
                  <Dot fill="#fff100" />
                </span>
                Pick-up coordinates:
              </div>
              <Row className="mt-8">Latitude: 41.02135510866602</Row>
              <Row className="mt-[33px]">Longitude: -74.27856445312501</Row>
            </section>
            <section>
              <div className="flex items-center">
                <span className="mr-[9px] ml-[3px] flex">
                  <Dot fill="#0078d7" />
                </span>
                Destination coordinates:
              </div>
              <Row className="mt-9 text-[31.1px] text-[#4eff20]">Latitude: 40.68063802521456</Row>
              <Row className="mt-[38px] text-[31.1px] text-[#4eff20]">Longitude: -73.38317871093751</Row>
            </section>
          </div>
        </main>

        <aside className="ml-auto flex w-[30px] shrink-0 flex-col bg-[#111216] pt-[261px]">
          <div className="h-[362px] bg-[#6b6c70]" />
          <svg viewBox="0 0 16 12" className="mt-auto mb-[2px] ml-[7px] h-3 w-4">
            <path d="M1 2L8 9L15 2" fill="none" stroke="#5c5d61" strokeWidth="3.5" />
          </svg>
        </aside>
      </div>
    </div>
  );
}
